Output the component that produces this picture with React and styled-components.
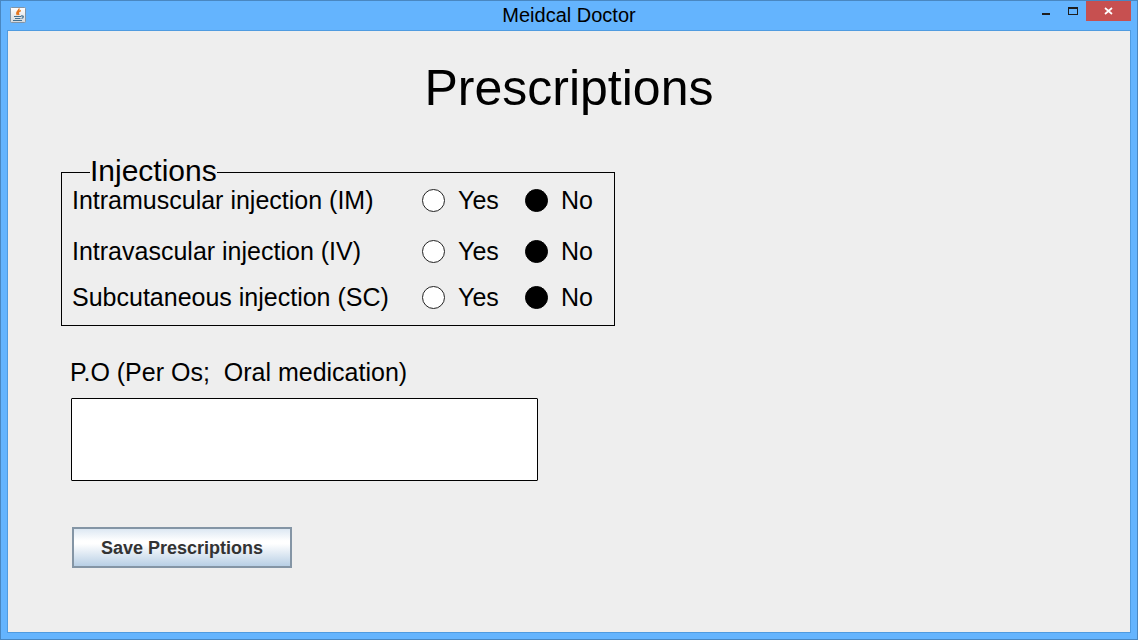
import React, { useState } from "react";
import styled, { createGlobalStyle } from "styled-components";

const GlobalStyle = createGlobalStyle`
  *, *::before, *::after { box-sizing: border-box; }
  body {
    margin: 0;
    background: #64b4fe;
    color: #000;
    font-family: "Liberation Sans", Arial, sans-serif;
  }
  input, textarea, button { font: inherit; color: inherit; margin: 0; }
`;

const Window = styled.div`
  display: flex;
  flex-direction: column;
  min-height: 100vh;
  padding: 0 6px 6px;
  border: 1px solid #4987c1;
  background: #64b4fe;
`;

const TitleBar = styled.header`
  display: grid;
  grid-template-columns: 1fr auto 1fr;
  height: 29px;
`;

const AppIcon = styled.svg`
  display: block;
  width: 16px;
  height: 16px;
  margin: 6px 0 0 3px;
`;

const WindowTitle = styled.span`
  font-size: 20px;
  line-height: 29px;
`;

const WindowControls = styled.div`
  display: flex;
  justify-content: flex-end;
  height: 20px;
`;

const ControlButton = styled.button`
  display: flex;
  align-items: center;
  justify-content: center;
  width: ${(p) => (p.$close ? 45 : 27)}px;
  height: 20px;
  padding: 0;
  border: 0;
  color: ${(p) => (p.$close ? "#fff" : "#1e1e1e")};
  background: ${(p) => (p.$close ? "#c75050" : "transparent")};
`;

const Content = styled.main`
  flex: 1;
  display: flex;
  flex-direction: column;
  padding: 32px 53px;
  border: 1px solid #4f9be0;
  background: #eee;
`;

const Heading = styled.h1`
  margin: 0 0 34px;
  font-size: 50px;
  font-weight: 400;
  line-height: 50px;
  text-align: center;
`;

const Form = styled.form`
  display: flex;
  flex-direction: column;
  align-items: flex-start;
`;

const Group = styled.fieldset`
  width: 100%;
  max-width: 554px;
  min-width: 0;
  margin: 10px 0 32px;
  padding: 0 10px 15px;
  border: 1px solid #000;
`;

const Legend = styled.legend`
  margin-left: 18px;
  padding: 0 0 2px;
  font-size: 30px;
  line-height: 28px;
`;

const Row = styled.div`
  display: grid;
  grid-template-columns: 350px 103px 1fr;
  align-items: center;
  margin-bottom: ${(p) => p.$gap}px;
  font-size: 25px;
  line-height: 26px;
`;

const Choice = styled.label`
  display: flex;
  align-items: center;
  gap: 13px;
`;

const Radio = styled.input`
  appearance: none;
  flex: none;
  width: 23px;
  height: 23px;
  border: 1px solid #222;
  border-radius: 50%;
  background: #fff;

  &:checked { background: #000; border-color: #000; }
`;

const FieldLabel = styled.label`
  margin: 0 0 12px 9px;
  font-size: 25px;
  line-height: 28px;
  white-space: pre;
`;

const TextArea = styled.textarea`
  width: 100%;
  max-width: 467px;
  height: 83px;
  margin: 0 0 46px 10px;
  padding: 6px;
  border: 1px solid #000;
  border-radius: 1px;
  background: #fff;
  font-size: 20px;
  resize: none;
`;

const SaveButton = styled.button`
  width: 220px;
  height: 41px;
  margin-left: 11px;
  padding: 2px 0 0;
  border: 2px solid #8495a5;
  background: linear-gradient(#dde8f3 0%, #fff 32%, #fff 40%, #b8cfe5 100%);
  color: #333;
  font-size: 18px;
  font-weight: 700;
`;

const injections = [
  { id: "im", label: "Intramuscular injection (IM)", gap: 25 },
  { id: "iv", label: "Intravascular injection (IV)", gap: 20 },
  { id: "sc", label: "Subcutaneous injection (SC)", gap: 0 },
];

function InjectionRow({ id, label, gap }) {
  const [value, setValue] = useState("No");
  return (
    <Row $gap={gap} role="radiogroup" aria-labelledby={`${id}-label`}>
      <span id={`${id}-label`}>{label}</span>
      {["Yes", "No"].map((option) => (
        <Choice key={option}>
          <Radio
            type="radio"
            name={id}
            value={option}
            checked={value === option}
            onChange={() => setValue(option)}
          />
          {option}
        </Choice>
      ))}
    </Row>
  );
}

function JavaIcon() {
  return (
    <AppIcon viewBox="0 0 16 16" aria-hidden="true">
      <defs>
        <linearGradient id="tile" x1="0" y1="0" x2="0" y2="1">
          <stop offset="0" stopColor="#fff" />
          <stop offset="1" stopColor="#d4d8dc" />
        </linearGradient>
      </defs>
      <rect x="0.5" y="0.5" width="15" height="15" rx="1" fill="url(#tile)" stroke="#8294a5" />
      <path d="M9 1.500C9.500 4 5 4.500 7.500 8M10.800 3.500C7.500 5 8 6 9 8" fill="none" stroke="#e5751d" strokeWidth="1.500" />
      <path d="M4 9.500h7M5 11.500h5.500M3 13.500h9M11 9c3.500-.5 2.500 2 .5 2.500" fill="none" stroke="#44708f" strokeWidth="1.200" />
    </AppIcon>
  );
}

export default function App() {
  return (
    <>
      <GlobalStyle />
      <Window>
        <TitleBar>
          <JavaIcon />
          <WindowTitle>Meidcal Doctor</WindowTitle>
          <WindowControls>
            <ControlButton type="button" aria-label="Minimize">
              <svg width="10" height="8" viewBox="0 0 10 8">
                <path d="M1 6h8v2H1z" fill="currentColor" />
              </svg>
            </ControlButton>
            <ControlButton type="button" aria-label="Maximize">
              <svg width="10" height="8" viewBox="0 0 10 8">
                <path d="M0 0h10v8H0zM1 2v5h8V2z" fill="currentColor" fillRule="evenodd" />
              </svg>
            </ControlButton>
            <ControlButton type="button" $close aria-label="Close">
              <svg width="9" height="8" viewBox="0 0 9 8">
                <path d="M1 1l7 6M8 1L1 7" fill="none" stroke="currentColor" strokeWidth="1.700" />
              </svg>
            </ControlButton>
          </WindowControls>
        </TitleBar>
        <Content>
          <Heading>Prescriptions</Heading>
          <Form onSubmit={(e) => e.preventDefault()}>
            <Group>
              <Legend>Injections</Legend>
              {injections.map((item) => (
                <InjectionRow key={item.id} {...item} />
              ))}
            </Group>
            <FieldLabel htmlFor="oral">{"P.O (Per Os;  Oral medication)"}</FieldLabel>
            <TextArea id="oral" />
            <SaveButton type="submit">Save Prescriptions</SaveButton>
          </Form>
        </Content>
      </Window>
    </>
  );
}
